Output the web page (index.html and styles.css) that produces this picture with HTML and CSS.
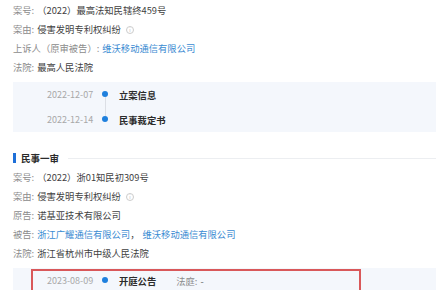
FILE: index.html
```html
<!DOCTYPE html>
<html lang="zh-CN">
<head>
    <meta charset="UTF-8">
    <meta name="viewport" content="width=device-width, initial-scale=1.0">
    <title>案件详情</title>
    <link rel="stylesheet" href="styles.css">
</head>
<body>
    <div class="case">
        <div class="info-row"><span class="label">案号:</span><span class="value">（2022）最高法知民辖终459号</span></div>
        <div class="info-row"><span class="label">案由:</span><span class="value">侵害发明专利权纠纷</span><span class="info-icon">i</span></div>
        <div class="info-row"><span class="label">上诉人（原审被告）:</span><a class="link">维沃移动通信有限公司</a></div>
        <div class="info-row"><span class="label">法院:</span><span class="value">最高人民法院</span></div>

        <div class="timeline">
            <div class="tl-row first">
                <span class="tl-date">2022-12-07</span>
                <span class="tl-dot"></span>
                <span class="tl-title">立案信息</span>
            </div>
            <div class="tl-row">
                <span class="tl-date">2022-12-14</span>
                <span class="tl-dot"></span>
                <span class="tl-title">民事裁定书</span>
            </div>
        </div>
    </div>

    <div class="section-head">
        <span class="section-bar"></span>
        <span class="section-title">民事一审</span>
        <span class="section-line"></span>
    </div>

    <div class="case">
        <div class="info-row"><span class="label">案号:</span><span class="value">（2022）浙01知民初309号</span></div>
        <div class="info-row"><span class="label">案由:</span><span class="value">侵害发明专利权纠纷</span><span class="info-icon">i</span></div>
        <div class="info-row"><span class="label">原告:</span><span class="value">诺基亚技术有限公司</span></div>
        <div class="info-row"><span class="label">被告:</span><a class="link">浙江广耀通信有限公司</a><span class="value comma">，</span><a class="link">维沃移动通信有限公司</a></div>
        <div class="info-row"><span class="label">法院:</span><span class="value">浙江省杭州市中级人民法院</span></div>

        <div class="timeline marked">
            <div class="tl-row">
                <span class="tl-date">2023-08-09</span>
                <span class="tl-dot"></span>
                <span class="tl-title">开庭公告</span>
                <span class="tl-extra"><span class="label">法庭:</span>-</span>
            </div>
            <div class="highlight"></div>
        </div>
    </div>
</body>
</html>
```

FILE: styles.css
```css
body {
    margin: 0;
    padding: 1px 0 0 13px;
    background: #fff;
    font-family: "Noto Sans CJK SC", "Noto Sans", sans-serif;
    font-size: 9.3px;
    color: #444;
    overflow: hidden;
}

/* Infozeilen */
.info-row {
    height: 19px;
    line-height: 19px;
    display: flex;
    align-items: center;
    white-space: nowrap;
}

.label {
    margin-right: 3px;
    color: #8c8c8c;
}

.value {
    color: #3f3f3f;
}

.link {
    color: #3a8bd2;
}

.comma {
    margin-right: 3px;
}

.info-icon {
    width: 6px;
    height: 6px;
    margin-left: 5px;
    border: 1px solid #ccc;
    border-radius: 50%;
    color: #bbb;
    font-size: 5px;
    line-height: 6px;
    text-align: center;
}

/* Zeitleiste */
.timeline {
    margin-top: 5px;
    background: #f4f7fc;
}

.timeline.marked {
    position: relative;
    height: 40px;
}

.tl-row {
    height: 25px;
    display: flex;
    align-items: center;
    padding-left: 34px;
    white-space: nowrap;
}

.tl-date {
    flex-shrink: 0;
    width: 46px;
    color: #a8a8a8;
    font-size: 9px;
    text-align: right;
}

.tl-dot {
    flex-shrink: 0;
    position: relative;
    width: 24px;
    height: 25px;
}

.tl-dot::before {
    content: "";
    position: absolute;
    left: 9px;
    top: 9px;
    width: 6px;
    height: 6px;
    border-radius: 50%;
    background: #1f80dd;
}

.tl-row.first .tl-dot::after {
    content: "";
    position: absolute;
    left: 12px;
    top: 15px;
    width: 1px;
    height: 19px;
    background: #dcdfe5;
}

.tl-title {
    margin-left: 2px;
    font-weight: bold;
    color: #2b2b2b;
}

.tl-extra {
    margin-left: 20px;
    color: #666;
}

/* Markierung */
.highlight {
    position: absolute;
    top: 1px;
    left: 18px;
    width: 326px;
    height: 40px;
    border: 2px solid #d9585a;
}

/* Abschnitt */
.section-head {
    margin-top: 16px;
    height: 20px;
    display: flex;
    align-items: center;
}

.section-bar {
    width: 3px;
    height: 10px;
    background: #1e6fd8;
}

.section-title {
    margin-left: 5px;
    font-weight: bold;
    font-size: 9.5px;
    color: #2b2b2b;
}

.section-line {
    flex: 1;
    height: 1px;
    margin-left: 9px;
    background: #eceef1;
}
```
